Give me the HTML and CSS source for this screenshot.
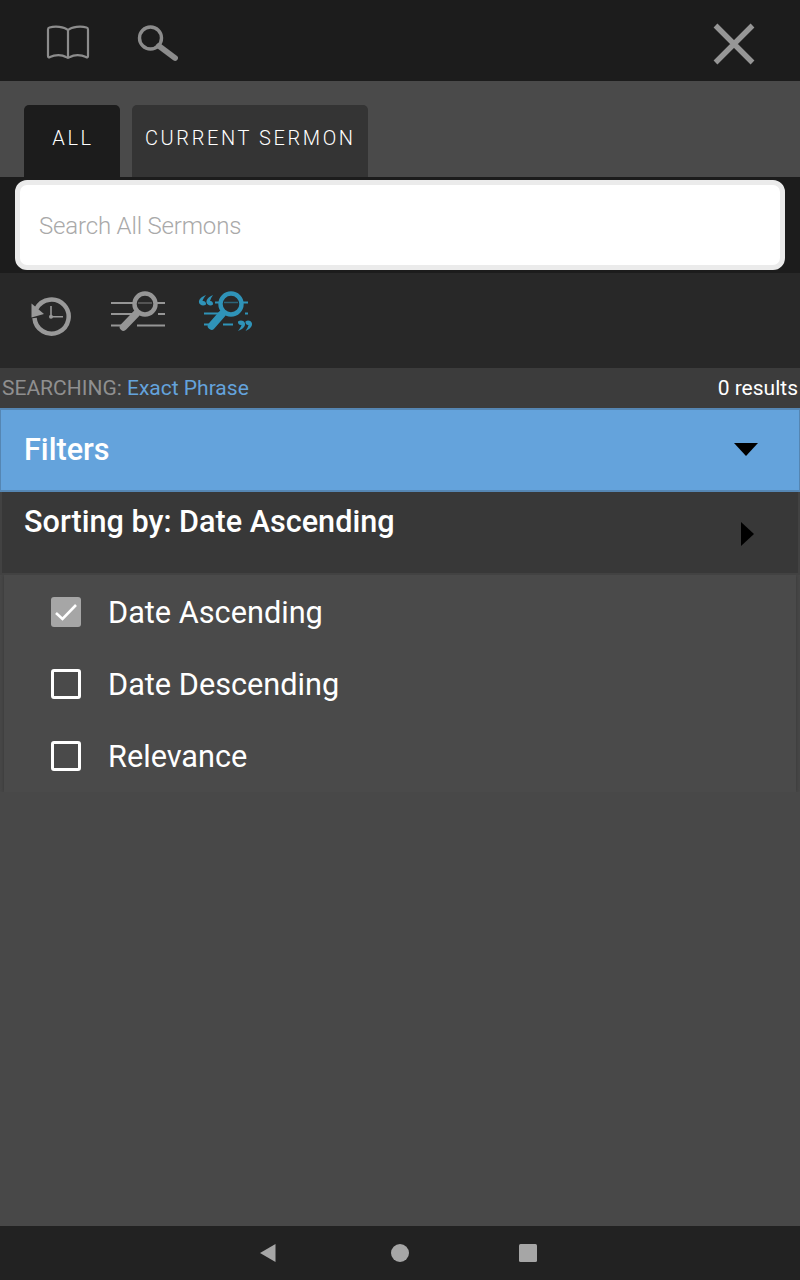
FILE: index.html
```html
<!DOCTYPE html>
<html lang="en">
<head>
<meta charset="utf-8">
<title>Search</title>
<link rel="stylesheet" href="styles.css">
</head>
<body>
<div class="app">
  <header class="topbar">
    <svg class="ic-book" width="44" height="38" viewBox="0 0 44 38" fill="none" stroke="#8c8c8c" stroke-width="2.2" stroke-linejoin="round" stroke-linecap="round">
      <path d="M22 6C18 2.500 9 1.800 3.500 3.500C2.500 3.800 2 4.500 2 5.500L2 32C2 33.500 2.800 33.800 4 33C9 30.500 16 30.500 20 33C21.300 34 22.700 34 24 33C28 30.500 35 30.500 40 33C41.200 33.800 42 33.500 42 32L42 5.500C42 4.500 41.500 3.800 40.500 3.500C35 1.800 26 2.500 22 6Z"/>
      <path d="M22 6V32.500"/>
    </svg>
    <svg class="ic-search" width="42" height="38" viewBox="0 0 42 38" fill="none" stroke="#8c8c8c">
      <circle cx="14.500" cy="14" r="11" stroke-width="3.400"/>
      <path d="M23 22L39 34" stroke-width="5.800" stroke-linecap="round"/>
    </svg>
    <svg class="ic-close" width="42" height="42" viewBox="0 0 42 42" stroke="#969696" stroke-width="5.400">
      <path d="M2.500 2.500L39.500 39.500M39.500 2.500L2.500 39.500"/>
    </svg>
  </header>

  <nav class="tabs">
    <div class="tab tab-active">ALL</div>
    <div class="tab">CURRENT SERMON</div>
  </nav>

  <section class="search-wrap">
    <div class="search-box">Search All Sermons</div>
  </section>

  <section class="tools">
    <svg class="tool-history" width="42" height="42" viewBox="0 0 42 42" fill="none" stroke="#999">
      <path d="M6.500 11.500A17.100 17.100 0 1 1 4.500 21" stroke-width="4.500"/>
      <path d="M1.500 6.500L14 17L1.500 20.500Z" fill="#999" stroke="none"/>
      <path d="M21 9V19.700H33" stroke-width="1.600"/>
      <circle cx="21" cy="19.700" r="2" fill="#999" stroke="none"/>
    </svg>
    <svg class="tool-lines" width="56" height="42" viewBox="0 -3 56 42" fill="none" stroke="#969696">
      <path d="M1 9H24M46 9H55M1 20H22M48 20H55M1 31.500H14M27 31.500H55" stroke-width="2"/>
      <path class="lens-line" d="M28 9H42" stroke-width="1.500"/>
      <circle cx="35" cy="10" r="10.500" stroke-width="4.400"/>
      <path d="M26 20L13.500 33" stroke-width="7.500" stroke-linecap="round"/>
    </svg>
    <svg class="tool-exact" width="56" height="42" viewBox="0 -3 56 42" fill="none" stroke="#2f93b8">
      <path d="M17 8.500H22M45 8.500H50M6 19.500H23M47 19.500H50M6 30.500H13M25 30.500H35" stroke-width="2"/>
      <path class="lens-line" d="M26 8.500H40" stroke-width="1.500"/>
      <circle cx="33" cy="10" r="10.500" stroke-width="4.400"/>
      <path d="M24 20L13.500 32" stroke-width="7.500" stroke-linecap="round"/>
      <path d="M8 1C3.500 2.500 .5 5.500 1 8.500C1.500 11 5 12.500 8 10.500C8.500 8.500 6.500 6.500 4.500 7C5 5 6.500 3 8 1ZM15 1C11 2.500 8 5.500 8.500 8.500C9 11 12.500 12.500 15 10.500C15.500 8.500 13.500 6.500 12 7C12.500 5 13.500 3 15 1Z" fill="#2f93b8" stroke="none"/>
      <path d="M40 37C44.500 35.500 47.500 32.500 47 29.500C46.500 27 43 25.500 40 27.500C39.500 29.500 41.500 31.500 43.500 31C43 33 41.500 35 40 37ZM47.500 37C51.500 35.500 54.500 32.500 54 29.500C53.500 27 50 25.500 47.500 27.500C47 29.500 49 31.500 50.500 31C50 33 49 35 47.500 37Z" fill="#2f93b8" stroke="none"/>
    </svg>
  </section>

  <section class="status">
    <div><span class="status-label">SEARCHING:</span> <span class="status-value">Exact Phrase</span></div>
    <div class="status-count">0 results</div>
  </section>

  <section class="panel-filters">
    <span>Filters</span>
    <span class="arrow-down"></span>
  </section>

  <section class="panel-sort">
    <span class="sort-title">Sorting by: Date Ascending</span>
    <span class="arrow-right"></span>
  </section>

  <ul class="options">
    <li class="option">
      <span class="check check-on">
        <svg width="30" height="30" viewBox="0 0 30 30" fill="none" stroke="#fff" stroke-width="2.600"><path d="M5 16L11.500 22L25 8"/></svg>
      </span>
      Date Ascending
    </li>
    <li class="option"><span class="check"></span>Date Descending</li>
    <li class="option"><span class="check"></span>Relevance</li>
  </ul>

  <div class="spacer"></div>

  <footer class="navbar">
    <svg class="nav-back" width="18" height="20" viewBox="0 0 18 20" fill="#a6a6a6"><path d="M16.500 1V19L1 10Z"/></svg>
    <svg class="nav-home" width="18" height="18" viewBox="0 0 18 18" fill="#a6a6a6"><circle cx="9" cy="9" r="9"/></svg>
    <svg class="nav-recent" width="18" height="18" viewBox="0 0 18 18" fill="#a6a6a6"><rect width="18" height="18" rx="1.500"/></svg>
  </footer>
</div>
</body>
</html>
```
FILE: styles.css
```css
* {
  box-sizing: border-box;
}

html,
body {
  margin: 0;
  padding: 0;
}

body {
  font-family: Roboto, "Liberation Sans", sans-serif;
  background: #484848;
  color: #fff;
}

.app {
  width: 800px;
  height: 1280px;
  display: flex;
  flex-direction: column;
  overflow: hidden;
}

.topbar {
  height: 81px;
  flex: none;
  background: #1c1c1c;
  display: flex;
  align-items: center;
  padding: 0 45px 0 46px;
}

.ic-book {
  margin-top: 5px;
}

.ic-search {
  margin-left: 46px;
  margin-top: 5px;
}

.ic-close {
  margin-left: auto;
  margin-top: 6px;
}

.tabs {
  height: 96px;
  flex: none;
  background: #4a4a4a;
  display: flex;
  align-items: flex-end;
  gap: 12px;
  padding-left: 24px;
}

.tab {
  height: 72px;
  padding: 21px 12px 0 13px;
  background: #343434;
  border-radius: 5px 5px 0 0;
  font-size: 20px;
  font-weight: 300;
  line-height: 24px;
  letter-spacing: 2.600px;
  color: #fff;
}

.tab-active {
  width: 96px;
  text-align: center;
  padding-left: 2px;
  padding-right: 0;
  background: #1c1c1c;
}

.search-wrap {
  height: 96px;
  flex: none;
  background: #1c1c1c;
  padding: 3px 15px 3px;
}

.search-box {
  height: 90px;
  background: #fff;
  border: 5px solid #ebebeb;
  border-radius: 12px;
  padding: 2px 19px 0;
  display: flex;
  align-items: center;
  font-size: 24px;
  font-weight: 300;
  letter-spacing: -0.170px;
  color: #a9a9a9;
}

.tools {
  height: 95px;
  flex: none;
  background: #282828;
  display: flex;
  align-items: flex-start;
  padding: 24px 0 0 30px;
}

.tool-lines {
  margin-left: 38px;
  margin-top: -6px;
}

.tool-exact {
  margin-left: 32px;
  margin-top: -6px;
}

.lens-line {
  opacity: 0.55;
}

.status {
  height: 40px;
  flex: none;
  background: #3c3c3c;
  display: flex;
  justify-content: space-between;
  align-items: center;
  padding: 0 2px;
  font-size: 21px;
}

.status-label {
  color: #8f8f8f;
}

.status-value {
  color: #64a3dc;
}

.status-count {
  color: #fff;
}

.panel-filters {
  height: 84px;
  flex: none;
  background: #64a3dc;
  border: 2px solid #5586b3;
  border-width: 2px 1px 2px 1px;
  display: flex;
  justify-content: space-between;
  align-items: center;
  padding: 0 41px 1px 23px;
  font-size: 30.600px;
  font-weight: 500;
  color: #fff;
}

.arrow-down {
  width: 0;
  height: 0;
  border-left: 12.500px solid transparent;
  border-right: 12.500px solid transparent;
  border-top: 13px solid #000;
}

.panel-sort {
  height: 83px;
  flex: none;
  z-index: 1;
  background: #383838;
  border: 2px solid #424242;
  border-top: 0;
  display: flex;
  justify-content: space-between;
  align-items: flex-start;
  padding: 11px 44px 0 22px;
}

.sort-title {
  font-size: 30.600px;
  font-weight: 500;
  line-height: 38px;
}

.arrow-right {
  width: 0;
  height: 0;
  margin-top: 19px;
  border-top: 12.500px solid transparent;
  border-bottom: 12.500px solid transparent;
  border-left: 13px solid #000;
}

.options {
  list-style: none;
  margin: 0 4px;
  padding: 1px 0 0;
  height: 217px;
  flex: none;
  background: #4a4a4a;
  box-shadow: 0 0 4px #363636;
}

.option {
  height: 72px;
  display: flex;
  align-items: center;
  padding-left: 47px;
  gap: 27px;
  font-size: 30.700px;
  color: #fff;
}

.check {
  width: 30px;
  height: 30px;
  flex: none;
  border: 3px solid #fff;
  border-radius: 3px;
}

.check-on {
  border: 0;
  background: #a6a6a6;
}

.check-on svg {
  display: block;
}

.spacer {
  flex: 1;
  background: #484848;
}

.navbar {
  height: 54px;
  flex: none;
  background: #222;
  display: flex;
  justify-content: center;
  align-items: center;
  padding-right: 4px;
}

.nav-home {
  margin-left: 114px;
}

.nav-recent {
  margin-left: 110px;
}
```
